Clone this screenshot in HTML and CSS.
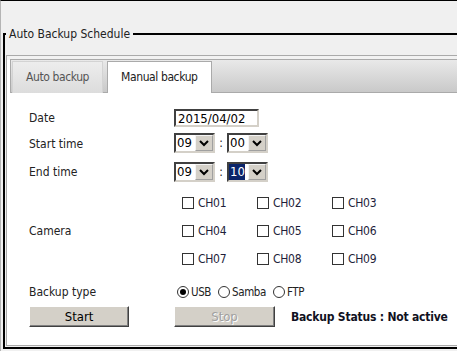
FILE: index.html
```html
<!DOCTYPE html>
<html lang="en">
<head>
    <meta charset="UTF-8">
    <meta name="viewport" content="width=device-width, initial-scale=1.0">
    <title>Auto Backup Schedule</title>
    <link rel="stylesheet" href="styles.css">
</head>
<body>
    <fieldset class="schedule">
        <legend>Auto Backup Schedule</legend>
        <div class="tabs">
            <ul class="tab-nav">
                <li class="tab">Auto backup</li>
                <li class="tab active">Manual backup</li>
            </ul>
            <div class="tab-panel">
                <div class="form-row row-date">
                    <span class="label">Date</span>
                    <input class="date-input" type="text" value="2015/04/02">
                </div>
                <div class="form-row row-start">
                    <span class="label">Start time</span>
                    <div class="time">
                        <div class="select"><span class="select-value">09</span><span class="select-btn"><svg width="10" height="8" viewBox="0 0 10 8"><polyline points="1,2 5,6 9,2" /></svg></span></div>
                        <span class="colon">:</span>
                        <div class="select"><span class="select-value">00</span><span class="select-btn"><svg width="10" height="8" viewBox="0 0 10 8"><polyline points="1,2 5,6 9,2" /></svg></span></div>
                    </div>
                </div>
                <div class="form-row row-end">
                    <span class="label">End time</span>
                    <div class="time">
                        <div class="select"><span class="select-value">09</span><span class="select-btn"><svg width="10" height="8" viewBox="0 0 10 8"><polyline points="1,2 5,6 9,2" /></svg></span></div>
                        <span class="colon">:</span>
                        <div class="select"><span class="select-value"><span class="selected">10</span></span><span class="select-btn"><svg width="10" height="8" viewBox="0 0 10 8"><polyline points="1,2 5,6 9,2" /></svg></span></div>
                    </div>
                </div>
                <div class="form-row row-camera">
                    <span class="label">Camera</span>
                    <div class="channels">
                        <label class="channel"><span class="checkbox"></span>CH01</label>
                        <label class="channel"><span class="checkbox"></span>CH02</label>
                        <label class="channel"><span class="checkbox"></span>CH03</label>
                        <label class="channel"><span class="checkbox"></span>CH04</label>
                        <label class="channel"><span class="checkbox"></span>CH05</label>
                        <label class="channel"><span class="checkbox"></span>CH06</label>
                        <label class="channel"><span class="checkbox"></span>CH07</label>
                        <label class="channel"><span class="checkbox"></span>CH08</label>
                        <label class="channel"><span class="checkbox"></span>CH09</label>
                    </div>
                </div>
                <div class="form-row row-type">
                    <span class="label">Backup type</span>
                    <div class="radios">
                        <label class="radio-item"><span class="radio checked"></span>USB</label>
                        <label class="radio-item"><span class="radio"></span>Samba</label>
                        <label class="radio-item"><span class="radio"></span>FTP</label>
                    </div>
                </div>
                <div class="form-row row-actions">
                    <button class="btn btn-start">Start</button>
                    <button class="btn btn-stop" disabled>Stop</button>
                    <span class="status">Backup Status : Not active</span>
                </div>
            </div>
        </div>
    </fieldset>
</body>
</html>
```

FILE: styles.css
```css
* {
    box-sizing: border-box;
}
html, body {
    margin: 0;
    height: 100%;
}
body {
    background-color: #f0f0f0;
    font-family: "DejaVu Sans Condensed", "DejaVu Sans", sans-serif;
    font-size: 12px;
    color: #222222;
    border-top: 1px solid #000000;
    border-left: 1px solid #b4b4b4;
    overflow: hidden;
}
.schedule {
    margin: 26px 0 0 2px;
    padding: 14px 0 1px 1px;
    border: 2px solid #000000;
    border-right: none;
    min-width: 0;
}
.schedule legend {
    padding: 0 3px;
    font-size: 12px;
    color: #222222;
}
.tabs {
    height: 291px;
    padding: 3px 0 0 3px;
    border: 1px solid #aaaaaa;
    border-right: none;
    background: linear-gradient(#f2f2f2 4px, #ffffff 4px);
}
.tab-nav {
    display: flex;
    gap: 4px;
    height: 34px;
    margin: 0;
    padding: 1px 0 0 1px;
    list-style: none;
    border: 1px solid #aaaaaa;
    border-right: none;
    background: linear-gradient(#e9e9e9, #c9c9c9);
}
.tab {
    height: 32px;
    padding: 0 13px;
    line-height: 31px;
    letter-spacing: -0.4px;
    border: 1px solid #d3d3d3;
    border-bottom: none;
    background: linear-gradient(#ededed, #dcdcdc);
    color: #555555;
}
.tab.active {
    border-color: #aaaaaa;
    background: #ffffff;
    color: #212121;
}
.tab-panel {
    margin-left: -3px;
    padding: 16px 0 0 22px;
}
.form-row {
    display: flex;
    align-items: center;
}
.label {
    width: 145px;
    flex-shrink: 0;
}
.row-date {
    height: 18px;
}
.row-start {
    height: 20px;
    margin-top: 6px;
}
.row-start .label {
    padding-top: 2px;
}
.row-end {
    height: 21px;
    margin-top: 8px;
}
.row-camera {
    margin-top: 7px;
}
.row-type {
    height: 20px;
    margin-top: 9px;
}
.row-actions {
    height: 21px;
    margin-top: 4px;
}
.date-input {
    width: 85px;
    height: 18px;
    margin: 0;
    padding: 0 0 0 2px;
    font-family: inherit;
    font-size: 13px;
    color: #000000;
    background: #ffffff;
    border: 2px solid;
    border-color: #404040 #d4d0c8 #d4d0c8 #404040;
    outline: none;
}
.time {
    display: flex;
    align-items: center;
}
.select {
    display: flex;
    width: 41px;
    height: 20px;
    padding: 0;
    background: #ffffff;
    border: 2px solid;
    border-color: #404040 #d4d0c8 #d4d0c8 #404040;
}
.select-value {
    width: 19px;
    padding: 1px 0 0 1px;
    font-size: 13px;
    line-height: 14px;
    color: #000000;
}
.selected {
    display: inline-block;
    margin: -1px 0 0 -1px;
    padding: 1px 0 1px 1px;
    background: #0a246a;
    color: #ffffff;
}
.select-btn {
    display: flex;
    align-items: center;
    justify-content: center;
    width: 18px;
    background: #d4d0c8;
    border: 1px solid;
    border-color: #f4f4f4 #a0a0a0 #a0a0a0 #f4f4f4;
}
.select-btn polyline {
    fill: none;
    stroke: #000000;
    stroke-width: 2;
}
.colon {
    width: 12px;
    text-align: center;
    font-size: 12px;
}
.channels {
    display: grid;
    grid-template-columns: repeat(3, 75px);
    grid-auto-rows: 28px;
    padding-left: 8px;
}
.channel {
    display: flex;
    align-items: center;
    gap: 4px;
    color: #1e1e3a;
    letter-spacing: -0.3px;
}
.checkbox {
    width: 12px;
    height: 12px;
    border: 1px solid #333333;
    background: #ffffff;
}
.radios {
    display: flex;
    align-items: center;
    padding-left: 3px;
    font-size: 11.5px;
}
.radio-item {
    display: flex;
    align-items: center;
    gap: 2px;
    margin-right: 7px;
    letter-spacing: -0.4px;
}
.radio {
    position: relative;
    width: 12px;
    height: 12px;
    border: 1px solid #333333;
    border-radius: 50%;
    background: #ffffff;
}
.radio.checked::after {
    content: "";
    position: absolute;
    left: 2px;
    top: 2px;
    width: 6px;
    height: 6px;
    border-radius: 50%;
    background: #000000;
}
.btn {
    height: 21px;
    margin: 0;
    padding: 0;
    font-family: inherit;
    font-size: 13px;
    background: #d4d0c8;
    border: 1px solid;
    border-color: #ffffff #404040 #404040 #ffffff;
    box-shadow: inset -1px -1px 0 #808080;
}
.btn-start {
    width: 100px;
    margin-right: 45px;
    color: #000000;
}
.btn-stop {
    width: 101px;
    color: #a0a0a0;
    text-shadow: 1px 1px 0 #ffffff;
}
.status {
    margin-left: 16px;
    font-weight: bold;
    letter-spacing: -0.2px;
    color: #111122;
}
```
